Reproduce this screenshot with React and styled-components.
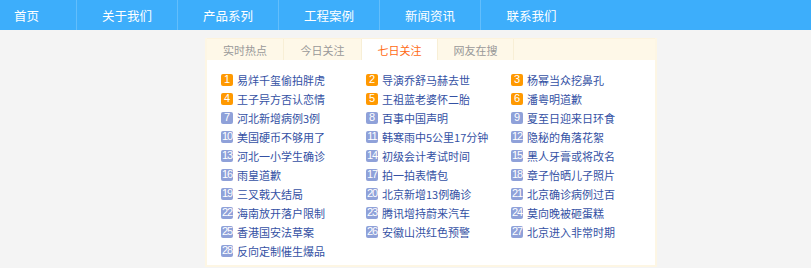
import React from "react";
import styled, { createGlobalStyle } from "styled-components";

const Global = createGlobalStyle`
  html, body { margin: 0; padding: 0; background: #f4f4f4; }
  body { font-family: "Noto Sans CJK SC", "Noto Sans", sans-serif; }
  * { box-sizing: border-box; }
`;

const Nav = styled.nav`
  display: flex;
  height: 30px;
  background: #3daefb;
`;

const NavItem = styled.a`
  display: flex;
  align-items: center;
  justify-content: ${(p) => (p.$first ? "flex-start" : "center")};
  width: ${(p) => (p.$first ? "77px" : "101px")};
  padding-left: ${(p) => (p.$first ? "14px" : "0")};
  height: 100%;
  color: #fff;
  font-size: 12.5px;
  text-decoration: none;
  border-right: ${(p) => (p.$last ? "none" : "1px solid #62befc")};
`;

const Main = styled.div`
  padding: 8px 0 0 205px;
`;

const Panel = styled.div`
  width: 452px;
  background: #fff;
  border: 2px solid #fdf6e4;
  border-top: none;
`;

const Tabs = styled.div`
  display: flex;
  height: 22px;
  background: #fef8e8;
  border-top: 1px solid #fdf3dc;
`;

const Tab = styled.div`
  width: ${(p) => p.$w}px;
  display: flex;
  align-items: center;
  justify-content: center;
  font-size: 11px;
  color: ${(p) => (p.$active ? "#ff6a13" : "#999")};
  background: ${(p) => (p.$active ? "#fff" : "transparent")};
  border-right: 1px solid #f8efd6;
`;

const List = styled.ol`
  list-style: none;
  margin: 0;
  padding: 10px 0 5px 14px;
  display: grid;
  grid-template-columns: repeat(3, 145px);
  grid-auto-rows: 19px;
`;

const Item = styled.li`
  display: flex;
  align-items: center;
  gap: 4px;
  font-size: 11px;
  color: #3451a4;
  white-space: nowrap;
`;

const Badge = styled.span`
  width: 12px;
  height: 12px;
  border-radius: 2px;
  background: ${(p) => (p.$hot ? "#ff9900" : "#8fa1d9")};
  color: #fff;
  font-family: "Liberation Sans", Arial, sans-serif;
  font-size: 11px;
  letter-spacing: ${(p) => (p.$two ? "-1px" : "0")};
  display: flex;
  align-items: center;
  justify-content: center;
  line-height: 1;
  flex-shrink: 0;
`;

const navs = ["首页", "关于我们", "产品系列", "工程案例", "新闻资讯", "联系我们"];
const tabs = [
  ["实时热点", 77],
  ["今日关注", 78],
  ["七日关注", 76],
  ["网友在搜", 76],
];
const items = [
  "易烊千玺偷拍胖虎", "导演乔舒马赫去世", "杨幂当众挖鼻孔",
  "王子异方否认恋情", "王祖蓝老婆怀二胎", "潘粤明道歉",
  "河北新增病例3例", "百事中国声明", "夏至日迎来日环食",
  "美国硬币不够用了", "韩寒雨中5公里17分钟", "隐秘的角落花絮",
  "河北一小学生确诊", "初级会计考试时间", "黑人牙膏或将改名",
  "雨皇道歉", "拍一拍表情包", "章子怡晒儿子照片",
  "三叉戟大结局", "北京新增13例确诊", "北京确诊病例过百",
  "海南放开落户限制", "腾讯增持蔚来汽车", "莫向晚被砸蛋糕",
  "香港国安法草案", "安徽山洪红色预警", "北京进入非常时期",
  "反向定制催生爆品",
];

export default function App() {
  return (
    <>
      <Global />
      <Nav>
        {navs.map((n, i) => (
          <NavItem key={n} href="#" $first={i === 0} $last={i === navs.length - 1}>
            {n}
          </NavItem>
        ))}
      </Nav>
      <Main>
        <Panel>
          <Tabs>
            {tabs.map(([t, w], i) => (
              <Tab key={t} $w={w} $active={i === 2}>
                {t}
              </Tab>
            ))}
          </Tabs>
          <List>
            {items.map((t, i) => (
              <Item key={t}>
                <Badge $hot={i < 6} $two={i >= 9}>{i + 1}</Badge>
                {t}
              </Item>
            ))}
          </List>
        </Panel>
      </Main>
    </>
  );
}
